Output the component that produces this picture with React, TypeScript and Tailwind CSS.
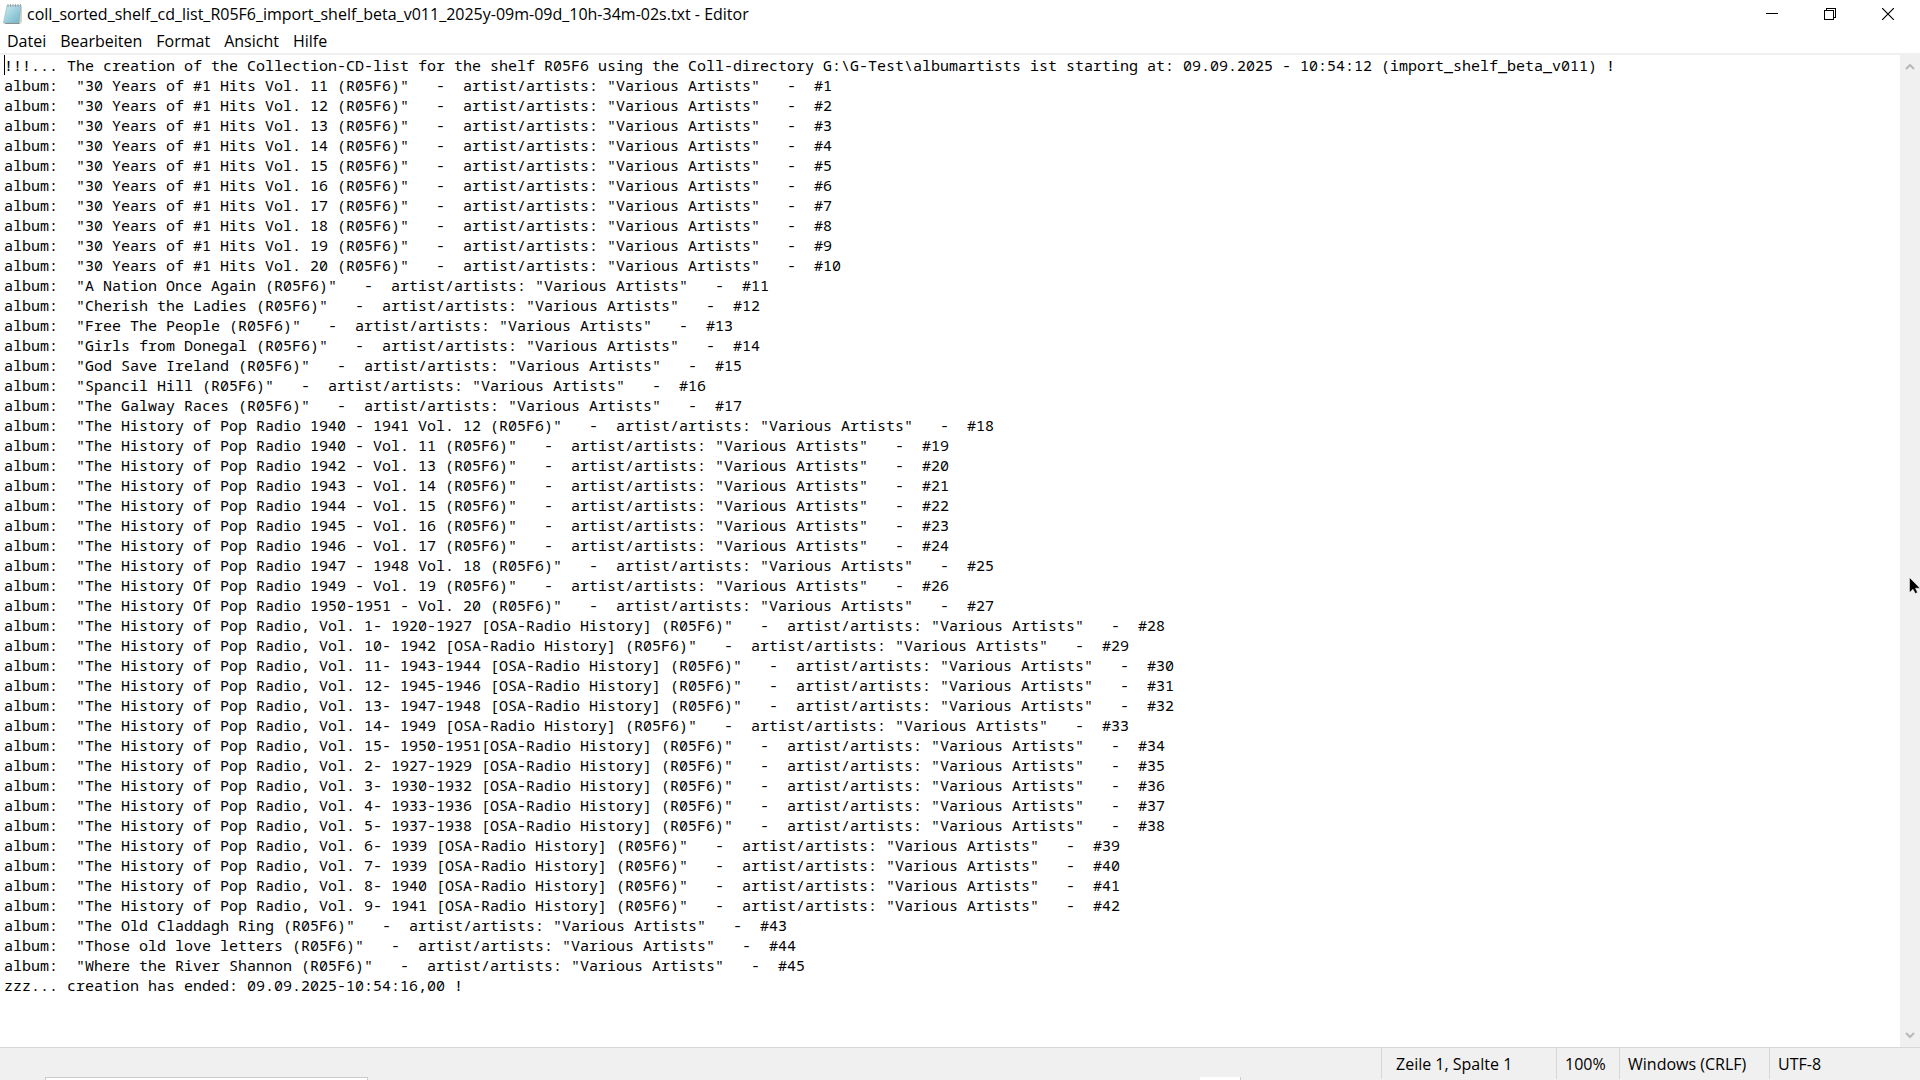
import { useState } from 'react';

const SHELF = 'R05F6';

const ALBUMS = [
  '30 Years of #1 Hits Vol. 11',
  '30 Years of #1 Hits Vol. 12',
  '30 Years of #1 Hits Vol. 13',
  '30 Years of #1 Hits Vol. 14',
  '30 Years of #1 Hits Vol. 15',
  '30 Years of #1 Hits Vol. 16',
  '30 Years of #1 Hits Vol. 17',
  '30 Years of #1 Hits Vol. 18',
  '30 Years of #1 Hits Vol. 19',
  '30 Years of #1 Hits Vol. 20',
  'A Nation Once Again',
  'Cherish the Ladies',
  'Free The People',
  'Girls from Donegal',
  'God Save Ireland',
  'Spancil Hill',
  'The Galway Races',
  'The History of Pop Radio 1940 - 1941 Vol. 12',
  'The History of Pop Radio 1940 - Vol. 11',
  'The History of Pop Radio 1942 - Vol. 13',
  'The History of Pop Radio 1943 - Vol. 14',
  'The History of Pop Radio 1944 - Vol. 15',
  'The History of Pop Radio 1945 - Vol. 16',
  'The History of Pop Radio 1946 - Vol. 17',
  'The History of Pop Radio 1947 - 1948 Vol. 18',
  'The History Of Pop Radio 1949 - Vol. 19',
  'The History Of Pop Radio 1950-1951 - Vol. 20',
  'The History of Pop Radio, Vol. 1- 1920-1927 [OSA-Radio History]',
  'The History of Pop Radio, Vol. 10- 1942 [OSA-Radio History]',
  'The History of Pop Radio, Vol. 11- 1943-1944 [OSA-Radio History]',
  'The History of Pop Radio, Vol. 12- 1945-1946 [OSA-Radio History]',
  'The History of Pop Radio, Vol. 13- 1947-1948 [OSA-Radio History]',
  'The History of Pop Radio, Vol. 14- 1949 [OSA-Radio History]',
  'The History of Pop Radio, Vol. 15- 1950-1951[OSA-Radio History]',
  'The History of Pop Radio, Vol. 2- 1927-1929 [OSA-Radio History]',
  'The History of Pop Radio, Vol. 3- 1930-1932 [OSA-Radio History]',
  'The History of Pop Radio, Vol. 4- 1933-1936 [OSA-Radio History]',
  'The History of Pop Radio, Vol. 5- 1937-1938 [OSA-Radio History]',
  'The History of Pop Radio, Vol. 6- 1939 [OSA-Radio History]',
  'The History of Pop Radio, Vol. 7- 1939 [OSA-Radio History]',
  'The History of Pop Radio, Vol. 8- 1940 [OSA-Radio History]',
  'The History of Pop Radio, Vol. 9- 1941 [OSA-Radio History]',
  'The Old Claddagh Ring',
  'Those old love letters',
  'Where the River Shannon',
];

const CONTENT = [
  `!!!... The creation of the Collection-CD-list for the shelf ${SHELF} using the Coll-directory G:\\G-Test\\albumartists ist starting at: 09.09.2025 - 10:54:12 (import_shelf_beta_v011) !`,
  ...ALBUMS.map(
    (a, i) => `album:  "${a} (${SHELF})"   -  artist/artists: "Various Artists"   -  #${i + 1}`,
  ),
  'zzz... creation has ended: 09.09.2025-10:54:16,00 !',
].join('\n');

const MENU = ['Datei', 'Bearbeiten', 'Format', 'Ansicht', 'Hilfe'];

function NotepadIcon() {
  return (
    <svg width="20" height="22" viewBox="0 0 20 22" className="shrink-0" aria-hidden="true">
      <defs>
        <linearGradient id="page" x1="0" y1="0" x2="1" y2="1">
          <stop offset="0" stopColor="#cdebf1" />
          <stop offset="1" stopColor="#6cb4c8" />
        </linearGradient>
      </defs>
      <path d="M17 3l2 1v15l-2 2H7z" fill="#d8d2c4" />
      <path d="M4 2.500h14l-2 17.500H0.500z" fill="url(#page)" stroke="#8fb3bd" strokeWidth="0.600" />
      <path d="M1 20h15l1 1H3z" fill="#8b8f90" />
      <path d="M5 1v3M7.500 1v3M10 1v3M12.500 1v3M15 1v3M17.500 1v3" stroke="#9aa3a6" strokeWidth="1" />
    </svg>
  );
}

function ScrollButton({ label, d }: { label: string; d: string }) {
  return (
    <button type="button" aria-label={label} className="grid h-6 w-5 place-items-center">
      <svg width="10" height="8" viewBox="0 0 10 8" fill="none" stroke="#b8b8b8" strokeWidth="2">
        <path d={d} />
      </svg>
    </button>
  );
}

function WindowButtons() {
  const cls = 'grid h-7 w-[58px] place-items-center hover:bg-gray-200';
  return (
    <div className="flex shrink-0 pr-[3px]">
      <button type="button" aria-label="Minimieren" className={cls}>
        <svg width="12" height="12" viewBox="0 0 12 12" stroke="#000" shapeRendering="crispEdges">
          <path d="M0 5.500h12" />
        </svg>
      </button>
      <button type="button" aria-label="Verkleinern" className={cls}>
        <svg width="12" height="12" viewBox="0 0 12 12" fill="none" stroke="#000" shapeRendering="crispEdges">
          <path d="M0.500 2.500h9v9h-9zM2.500 2.500v-2h9v9h-2" />
        </svg>
      </button>
      <button type="button" aria-label="Schließen" className={cls}>
        <svg width="12" height="12" viewBox="0 0 12 12" stroke="#000" strokeWidth="1.200">
          <path d="M0 0l12 12M12 0L0 12" />
        </svg>
      </button>
    </div>
  );
}

export default function App() {
  const [text, setText] = useState(CONTENT);

  return (
    <div className="relative flex h-screen flex-col overflow-hidden bg-white font-['Segoe_UI','Open_Sans',sans-serif] text-base text-black">
      <header className="flex h-7 items-center justify-between">
        <div className="flex min-w-0 items-center gap-1 pl-[3px]">
          <NotepadIcon />
          <h1 className="truncate">
            coll_sorted_shelf_cd_list_R05F6_import_shelf_beta_v011_2025y-09m-09d_10h-34m-02s.txt - Editor
          </h1>
        </div>
        <WindowButtons />
      </header>

      <nav className="flex h-[27px] items-center border-b-2 border-[#f0f0f0]">
        {MENU.map((m) => (
          <button key={m} type="button" className="px-[7px] pt-px hover:bg-sky-100">
            {m}
          </button>
        ))}
      </nav>

      <main className="flex min-h-0 flex-1">
        <div className="relative flex min-w-0 flex-1">
          <textarea
            aria-label="Text-Editor"
            spellCheck={false}
            wrap="off"
            value={text}
            onChange={(e) => setText(e.target.value)}
            className="flex-1 resize-none overflow-hidden pl-1 font-[Consolas,'Noto_Sans_Mono','Liberation_Mono',monospace] text-[15px] leading-5 outline-none"
          />
          <span className="absolute left-1 top-0 h-5 w-px bg-black" />
        </div>
        <div className="flex w-5 flex-col justify-between bg-[#f0f0f0]">
          <ScrollButton label="Nach oben" d="M1 6l4-4 4 4" />
          <ScrollButton label="Nach unten" d="M1 2l4 4 4-4" />
        </div>
      </main>

      <footer className="flex h-[33px] justify-end border-t border-[#d7d7d7] bg-[#f0f0f0] pb-px">
        <span className="flex w-[175px] items-center border-l border-[#d7d7d7] pl-3.5">Zeile 1, Spalte 1</span>
        <span className="flex w-[63px] items-center border-l border-[#d7d7d7] pl-2">100%</span>
        <span className="flex w-[150px] items-center border-l border-[#d7d7d7] pl-2">Windows (CRLF)</span>
        <span className="flex w-[151px] items-center border-l border-[#d7d7d7] pl-2">UTF-8</span>
      </footer>

      <span className="absolute bottom-0 left-[45px] h-[3px] w-[323px] border border-b-0 border-[#cccccc] bg-white" />
      <span className="absolute bottom-0 left-[1200px] h-[3px] w-[41px] border-r border-[#cccccc] bg-white" />

      <svg className="absolute right-0 top-[577px]" width="11" height="17" viewBox="0 0 11 17" aria-hidden="true">
        <path d="M0.500 0.500v15l3.500-3.300 2.300 4.300 2.200-1-2-4.300h4.500z" fill="#000" stroke="#fff" strokeWidth="0.500" />
      </svg>
    </div>
  );
}
